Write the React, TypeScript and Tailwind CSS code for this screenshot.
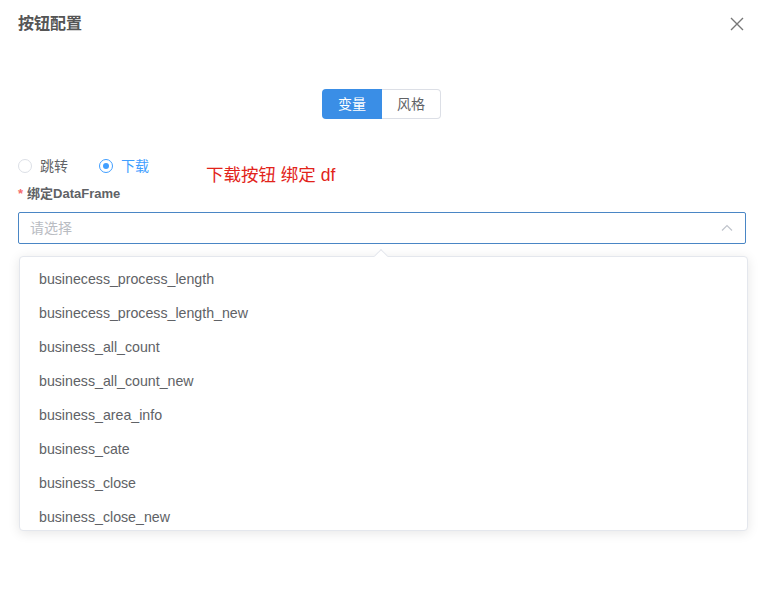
import React from "react";

const options = [
  "businecess_process_length",
  "businecess_process_length_new",
  "business_all_count",
  "business_all_count_new",
  "business_area_info",
  "business_cate",
  "business_close",
  "business_close_new",
];

const App: React.FC = () => {
  return (
    <div
      className="w-[763px] h-[613px] bg-white overflow-hidden text-[#606266]"
      style={{ fontFamily: '"Liberation Sans", "Noto Sans CJK SC", sans-serif' }}
    >
      {/* header */}
      <div className="flex items-center justify-between pl-[18px] pr-[19px] h-[48px]">
        <span className="text-[16px] font-semibold text-[#555]">按钮配置</span>
        <svg width="14" height="14" viewBox="0 0 14 14" className="text-[#777]">
          <path d="M1 1L13 13M13 1L1 13" stroke="currentColor" strokeWidth="1.4" />
        </svg>
      </div>

      {/* tabs */}
      <div className="flex justify-center mt-[41px]">
        <button className="w-[60px] h-[30px] bg-[#3a8ee6] text-white text-[14px] rounded-l-[4px]">
          变量
        </button>
        <button className="w-[59px] h-[30px] border border-l-0 border-[#dcdfe6] text-[#606266] text-[14px] rounded-r-[4px]">
          风格
        </button>
      </div>

      {/* form */}
      <div className="px-[18px] mt-[32px]">
        <div className="flex items-center h-[30px]">
          <div className="flex items-center gap-[8px]">
            <span className="w-[14px] h-[14px] rounded-full border border-[#dcdfe6]" />
            <span className="text-[14px] text-[#606266]">跳转</span>
          </div>
          <div className="flex items-center gap-[8px] ml-[31px]">
            <span className="w-[14px] h-[14px] rounded-full border border-[#409eff] flex items-center justify-center">
              <span className="w-[6px] h-[6px] rounded-full bg-[#409eff]" />
            </span>
            <span className="text-[14px] text-[#409eff]">下载</span>
          </div>
          <span className="ml-[57px] mt-[18px] text-[17.5px] text-[#e2231a]">下载按钮 绑定 df</span>
        </div>
        <div className="text-[13px] font-semibold text-[#606266] h-[20px] flex items-center mt-[3px]">
          <span className="text-[#f56c6c] mr-[4px]">*</span>绑定DataFrame
        </div>
        <div className="mt-[8px] h-[32px] w-[728px] border border-[#4a86c5] rounded-[2px] flex items-center justify-between pl-[11px] pr-[12px]">
          <span className="text-[14px] text-[#b9bcc2]">请选择</span>
          <svg width="12" height="8" viewBox="0 0 12 8">
            <path d="M1 6.5L6 1.5L11 6.5" stroke="#c0c4cc" strokeWidth="1.2" fill="none" />
          </svg>
        </div>

        {/* dropdown */}
        <div className="relative mt-[12px] ml-[1px] w-[729px] h-[275px] border border-[#e4e7ed] rounded-[4px] bg-white shadow-[0_2px_12px_0_rgba(0,0,0,0.1)]">
          <div className="absolute -top-[6px] left-[356px] w-[10px] h-[10px] bg-white border-l border-t border-[#e4e7ed] rotate-45" />
          <div className="h-full overflow-hidden pt-[6px]">
            {options.map((o) => (
              <div key={o} className="h-[34px] flex items-center px-[19px] text-[14.2px] text-[#606266]">
                {o}
              </div>
            ))}
          </div>
        </div>
      </div>
    </div>
  );
};

export default App;
